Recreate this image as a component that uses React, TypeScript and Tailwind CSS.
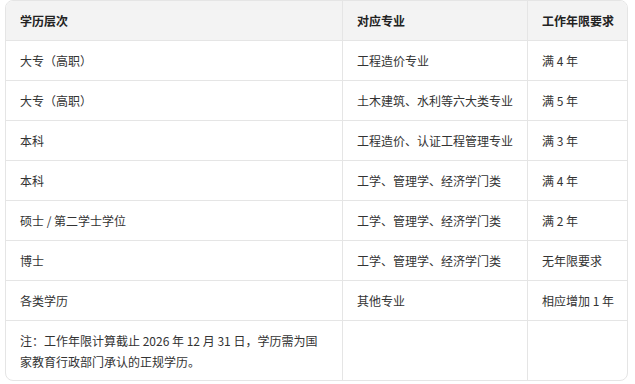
export default function App() {
  const rows = [
    ["大专（高职）", "工程造价专业", "满 4 年"],
    ["大专（高职）", "土木建筑、水利等六大类专业", "满 5 年"],
    ["本科", "工程造价、认证工程管理专业", "满 3 年"],
    ["本科", "工学、管理学、经济学门类", "满 4 年"],
    ["硕士 / 第二学士学位", "工学、管理学、经济学门类", "满 2 年"],
    ["博士", "工学、管理学、经济学门类", "无年限要求"],
    ["各类学历", "其他专业", "相应增加 1 年"],
  ];

  const cell = "border-r border-b border-[#e5e5e5] pl-[14px] pr-[8px] flex items-center whitespace-nowrap";

  return (
    <div className="w-[635px] h-[384px] bg-white text-[12px] text-[#333] font-['Noto_Sans_CJK_SC','Noto_Sans',sans-serif]">
      <div className="ml-[5px] w-[623px] border border-[#e5e5e5] rounded-[8px] overflow-hidden">
        <div className="grid grid-cols-[337px_185px_99px]">
          <div className={`${cell} h-[40px] bg-[#f3f3f3] font-bold text-[#222]`}>学历层次</div>
          <div className={`${cell} h-[40px] bg-[#f3f3f3] font-bold text-[#222]`}>对应专业</div>
          <div className={`${cell} h-[40px] bg-[#f3f3f3] font-bold text-[#222] border-r-0 pl-[12px]`}>工作年限要求</div>
          {rows.map((r, i) => (
            <div key={i} className="contents">
              <div className={`${cell} h-[40px]`}>{r[0]}</div>
              <div className={`${cell} h-[40px]`}>{r[1]}</div>
              <div className={`${cell} h-[40px] border-r-0 pl-[12px]`}>{r[2]}</div>
            </div>
          ))}
          <div className="border-r border-[#e5e5e5] px-[14px] h-[59px] flex items-center leading-[21px]">
            注：工作年限计算截止 2026 年 12 月 31 日，学历需为国家教育行政部门承认的正规学历。
          </div>
          <div className="border-r border-[#e5e5e5] h-[59px]"></div>
          <div className="h-[59px]"></div>
        </div>
      </div>
    </div>
  );
}
